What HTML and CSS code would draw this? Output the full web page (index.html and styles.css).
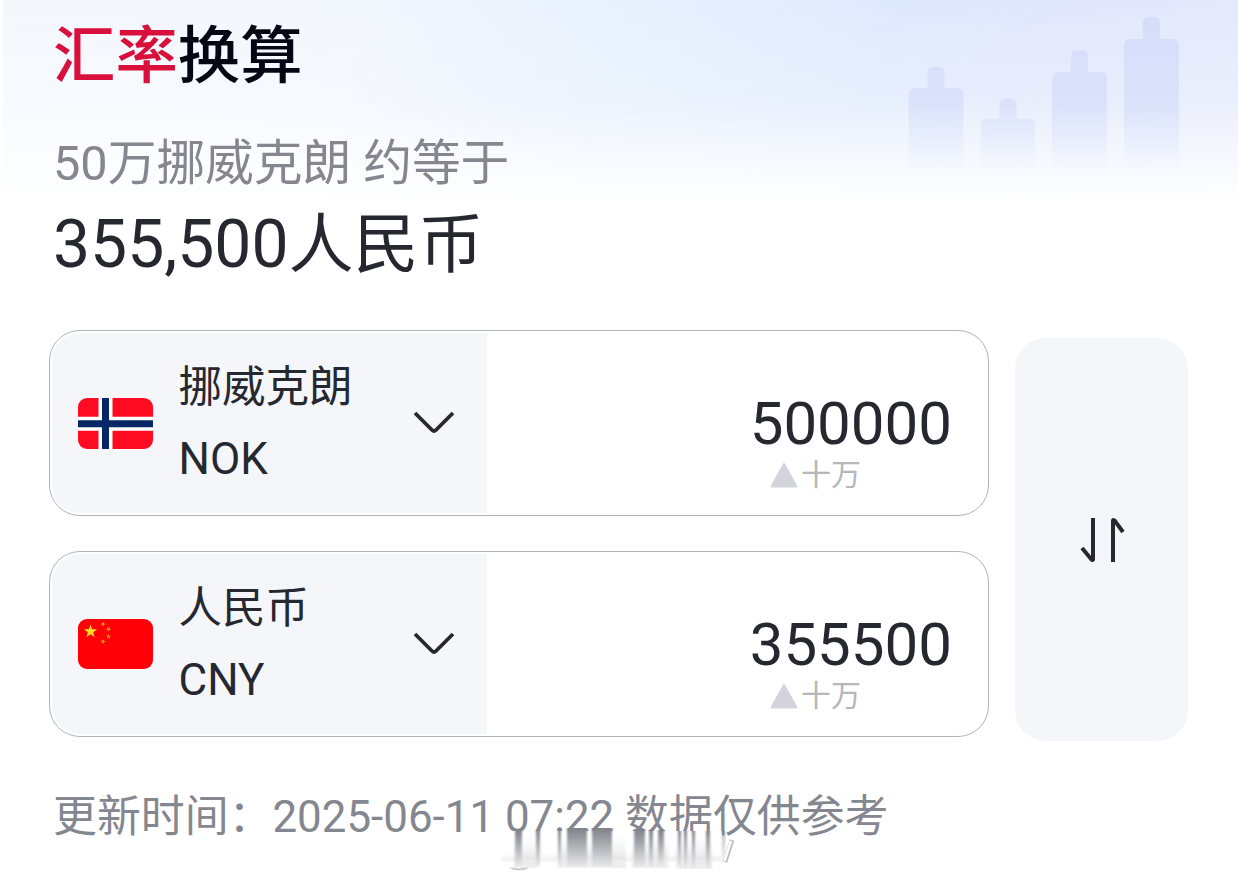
FILE: index.html
```html
<!DOCTYPE html>
<html lang="zh-CN">

<head>
    <meta charset="UTF-8">
    <title>汇率换算</title>
    <link rel="stylesheet" href="styles.css">
</head>

<body>
    <div class="page">
        <svg class="hero-bars" width="290" height="200" viewBox="0 0 290 200">
            <defs>
                <linearGradient id="barFade" gradientUnits="userSpaceOnUse" x1="0" y1="20" x2="0" y2="190">
                    <stop offset="0" stop-color="#d3dbfa" stop-opacity="0.85" />
                    <stop offset="0.5" stop-color="#d6dffa" stop-opacity="0.75" />
                    <stop offset="0.75" stop-color="#e3ebfd" stop-opacity="0.5" />
                    <stop offset="1" stop-color="#ffffff" stop-opacity="0" />
                </linearGradient>
            </defs>
            <g fill="url(#barFade)">
                <path d="M8.500 190V95q0-7 7-7h12V73q0-6 6-6h5q6 0 6 6v15h12q7 0 7 7v95z" />
                <path d="M80.500 190V126q0-7 7-7h12V104q0-6 6-6h5q6 0 6 6v15h12q7 0 7 7v64z" />
                <path d="M152 190V79q0-7 7-7h12V56q0-6 6-6h5q6 0 6 6v16h12q7 0 7 7v111z" />
                <path d="M224 190V46q0-7 7-7h12V23q0-6 6-6h5q6 0 6 6v16h12q7 0 7 7v144z" />
            </g>
        </svg>

        <header class="header">
            <h1 class="title"><span class="accent">汇率</span>换算</h1>
            <p class="subtitle">50万挪威克朗 约等于</p>
            <p class="result">355,500<span class="result-unit">人民币</span></p>
        </header>

        <main class="converter">
            <div class="cards">
                <div class="card">
                    <div class="currency">
                        <svg class="flag" width="75" height="51" viewBox="0 0 75 51">
                            <rect width="75" height="51" fill="#ff0b22" />
                            <path d="M27.500 0V51M0 25.700H75" stroke="#fff" stroke-width="14" />
                            <path d="M27.500 0V51M0 25.700H75" stroke="#062765" stroke-width="7" />
                        </svg>
                        <div class="names">
                            <span class="name">挪威克朗</span>
                            <span>NOK</span>
                        </div>
                        <svg class="chevron" width="42" height="26" viewBox="0 0 42 26">
                            <path d="M2 3L19 20q2 2 4 0L40 3" />
                        </svg>
                    </div>
                    <div class="amount">
                        <span class="value">500000</span>
                        <div class="unit">
                            <svg width="28" height="26" viewBox="0 0 28 26">
                                <path d="M14 2L26.500 24.500H1.500z" />
                            </svg>
                            <span>十万</span>
                        </div>
                    </div>
                </div>

                <div class="card">
                    <div class="currency">
                        <svg class="flag" width="75" height="50" viewBox="0 0 75 50">
                            <defs>
                                <path id="star" d="M0-1L.235-.324.951-.309.38.124.588.809 0 .4-.588.809-.38.124-.951-.309-.235-.324z" />
                            </defs>
                            <rect width="75" height="50" fill="#fe0006" />
                            <use href="#star" fill="#ffdf20" transform="translate(12.500 12.500) scale(7)" />
                            <g fill="#ff9a1c">
                                <use href="#star" transform="translate(25 5) rotate(20) scale(2.700)" />
                                <use href="#star" transform="translate(30.500 10) rotate(40) scale(2.700)" />
                                <use href="#star" transform="translate(30.500 17.500) scale(2.700)" />
                                <use href="#star" transform="translate(25 22.500) rotate(20) scale(2.700)" />
                            </g>
                        </svg>
                        <div class="names">
                            <span class="name">人民币</span>
                            <span>CNY</span>
                        </div>
                        <svg class="chevron" width="42" height="26" viewBox="0 0 42 26">
                            <path d="M2 3L19 20q2 2 4 0L40 3" />
                        </svg>
                    </div>
                    <div class="amount">
                        <span class="value">355500</span>
                        <div class="unit">
                            <svg width="28" height="26" viewBox="0 0 28 26">
                                <path d="M14 2L26.500 24.500H1.500z" />
                            </svg>
                            <span>十万</span>
                        </div>
                    </div>
                </div>
            </div>

            <button class="swap" type="button" aria-label="swap">
                <svg width="46" height="46" viewBox="0 0 46 46">
                    <path d="M13 1V42q0 2-2 0L2 31M33 45V4q0-2 2 0L43 15" />
                </svg>
            </button>
        </main>

        <footer class="footer">
            <span>更新时间：2025-06-11 07:22 数据仅供参考</span>
            <!-- smeared streaks under the timestamp -->
            <svg class="smear" width="250" height="50" viewBox="0 0 250 50">
                <defs>
                    <linearGradient id="streak" x1="0" y1="0" x2="0" y2="1">
                        <stop offset="0" stop-color="#7f8089" />
                        <stop offset="0.4" stop-color="#a9aab0" />
                        <stop offset="1" stop-color="#e9e9eb" />
                    </linearGradient>
                    <linearGradient id="haze" x1="0" y1="0" x2="0" y2="1">
                        <stop offset="0" stop-color="#fff" stop-opacity="0" />
                        <stop offset="0.7" stop-color="#e6e6e8" />
                        <stop offset="1" stop-color="#f1f1f2" />
                    </linearGradient>
                    <filter id="soft" x="-10%" y="-10%" width="120%" height="120%">
                        <feGaussianBlur stdDeviation="1.1 0.5" />
                    </filter>
                </defs>
                <path d="M8 3H224V14H234V42H8z" fill="#fff" />
                <g filter="url(#soft)">
                    <rect x="16" y="6" width="24" height="34" fill="url(#haze)" />
                    <rect x="60" y="4" width="68" height="36" fill="url(#haze)" />
                    <rect x="134" y="4" width="36" height="36" fill="url(#haze)" />
                    <rect x="178" y="4" width="36" height="37" fill="url(#haze)" />
                    <path d="M4 22H230L226 34H4z" fill="url(#haze)" opacity="0.5" />
                    <g fill="url(#streak)">
                        <rect x="17" y="2" width="7" height="36" />
                        <rect x="38" y="2" width="4" height="36" />
                        <rect x="60" y="2" width="3" height="36" />
                        <rect x="69" y="0" width="20" height="39" />
                        <rect x="94" y="0" width="20" height="39" />
                        <rect x="136" y="1" width="11" height="38" />
                        <rect x="151" y="2" width="4" height="37" />
                        <rect x="160" y="2" width="6" height="36" />
                        <rect x="180" y="3" width="3" height="36" />
                        <rect x="186" y="3" width="3" height="37" />
                        <rect x="194" y="3" width="3" height="37" />
                        <rect x="208" y="3" width="4" height="37" />
                        <rect x="224" y="3" width="3" height="28" opacity="0.6" />
                    </g>
                    <path d="M13 40q8 3 16 0" fill="none" stroke="#c4c4c6" stroke-width="1.500" />
                </g>
                <path d="M234 12L227 34" stroke="#bbbbbe" stroke-width="4.500" />
                <path d="M233 13L226.500 33" stroke="#fff" stroke-width="2.500" />
            </svg>
        </footer>
    </div>
</body>

</html>
```
FILE: styles.css
```css
:root {
    --text-color: #262830;
    --muted-color: #858790;
    --light-color: #b6b7bc;
    --panel-color: #f4f6fa;
    --border-color: #b1b3b5;
    --accent-color: #d9103c;
}

* {
    box-sizing: border-box;
}

body {
    margin: 0;
    background-color: #ffffff;
    color: var(--text-color);
    font-family: Roboto, "Noto Sans CJK SC", sans-serif;
}

.page {
    position: relative;
    height: 882px;
    padding: 20px 50px 0 49px;
    overflow: hidden;
    background-image:
        linear-gradient(to right, #ffffff 3px, transparent 3px),
        linear-gradient(to bottom, rgba(255, 255, 255, 0) 0, rgba(255, 255, 255, 0.25) 100px, rgba(255, 255, 255, 0.6) 145px, #ffffff 202px),
        linear-gradient(105deg, #f4f8fd 0, #f3f7fe 28%, #e6f0fd 50%, #dfe9fc 70%, #e2e7fb 85%, #e4eafb 100%);
    background-size: 100% 204px;
    background-repeat: no-repeat;
}

.hero-bars {
    position: absolute;
    top: 0;
    left: 900px;
}

.header {
    position: relative;
    padding-left: 4px;
}

.title {
    margin: 0;
    font-size: 62.4px;
    line-height: 74px;
    font-weight: 500;
    color: #050814;
}

.accent {
    color: var(--accent-color);
}

.subtitle {
    margin: 40px 0 0;
    font-size: 48.7px;
    line-height: 60px;
    color: var(--muted-color);
}

.result {
    margin: 11px 0 0;
    font-size: 66px;
    line-height: 80px;
}

.result-unit {
    font-size: 65px;
}

.converter {
    display: flex;
    align-items: flex-start;
    gap: 26px;
    margin-top: 45px;
}

.cards {
    display: flex;
    flex-direction: column;
    gap: 35px;
    width: 940px;
}

.card {
    display: flex;
    height: 186px;
    padding: 2px;
    border: 1.5px solid var(--border-color);
    border-radius: 31px;
    background-color: #ffffff;
}

.currency {
    display: flex;
    align-items: center;
    width: 435px;
    padding: 0 32px 0 26px;
    border-radius: 28px 0 0 28px;
    background-color: var(--panel-color);
}

.flag {
    border-radius: 9px;
}

.names {
    display: flex;
    flex: 1;
    flex-direction: column;
    margin-left: 25.5px;
    font-size: 44px;
    line-height: 72px;
}

.name {
    padding-top: 2px;
    font-size: 43.5px;
    line-height: 70px;
}

.chevron path {
    fill: none;
    stroke: var(--text-color);
    stroke-width: 3.8;
}

.amount {
    display: flex;
    flex: 1;
    flex-direction: column;
    align-items: flex-end;
    padding: 61px 34px 0 0;
}

.value {
    font-size: 60px;
    line-height: 60px;
}

.unit {
    display: flex;
    align-items: center;
    gap: 3px;
    margin: 3px 91px 0 0;
    font-size: 30px;
    line-height: 36px;
    color: var(--light-color);
}

.unit path {
    fill: #d3d3dc;
    stroke: #d3d3dc;
    stroke-width: 2;
    stroke-linejoin: round;
}

.swap {
    display: flex;
    align-items: center;
    justify-content: center;
    width: 173px;
    height: 403px;
    margin-top: 8px;
    padding: 0 0 0 3px;
    border: none;
    border-radius: 31px;
    background-color: var(--panel-color);
    cursor: pointer;
}

.swap path {
    fill: none;
    stroke: var(--text-color);
    stroke-width: 4;
}

.footer {
    position: relative;
    margin-top: 46px;
    padding-left: 4px;
    font-size: 43.9px;
    line-height: 60px;
    color: var(--muted-color);
    white-space: nowrap;
}

.smear {
    position: absolute;
    top: 41px;
    left: 449px;
}
```
